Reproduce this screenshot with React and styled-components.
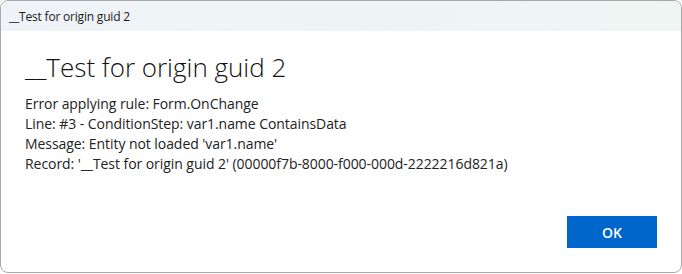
import React from "react";
import styled, { createGlobalStyle } from "styled-components";

const Global = createGlobalStyle`
  html, body { margin: 0; padding: 0; background: #ffffff; }
  body { font-family: "Open Sans", "Noto Sans", sans-serif; }
`;

const Window = styled.div`
  box-sizing: border-box;
  width: 682px;
  height: 273px;
  border: 1px solid #a9a9a9;
  border-radius: 8px;
  overflow: hidden;
  display: flex;
  flex-direction: column;
  background: #ffffff;
`;

const TitleBar = styled.div`
  height: 30px;
  display: flex;
  align-items: center;
  padding-left: 8px;
  background: linear-gradient(90deg, #eff3f7 0%, #eef4f6 60%, #edf6f3 100%);
  font-size: 12px;
  color: #1a1a1a;
  letter-spacing: -0.2px;
`;

const Content = styled.div`
  flex: 1;
  display: flex;
  flex-direction: column;
  padding: 19px 24px 0 24px;
`;

const Heading = styled.h1`
  margin: 0;
  font-size: 26px;
  font-weight: 300;
  color: #111;
  line-height: 34px;
`;

const Message = styled.div`
  margin-top: 10px;
  font-size: 14px;
  line-height: 20px;
  color: #222;
  letter-spacing: -0.06px;
`;

const Footer = styled.div`
  margin-top: auto;
  display: flex;
  justify-content: flex-end;
  padding: 0 24px 24px 0;
`;

const Button = styled.button`
  width: 90px;
  height: 32px;
  border: none;
  background: #0066cc;
  color: #ffffff;
  font-family: "Open Sans", "Noto Sans", sans-serif;
  font-size: 14px;
  font-weight: 600;
`;

export default function App() {
  const lines = [
    "Error applying rule: Form.OnChange",
    "Line: #3 - ConditionStep: var1.name ContainsData",
    "Message: Entity not loaded 'var1.name'",
    "Record: '__Test for origin guid 2' (00000f7b-8000-f000-000d-2222216d821a)",
  ];
  return (
    <>
      <Global />
      <Window>
        <TitleBar>__Test for origin guid 2</TitleBar>
        <Content>
          <Heading>__Test for origin guid 2</Heading>
          <Message>
            {lines.map((l) => (
              <div key={l}>{l}</div>
            ))}
          </Message>
        </Content>
        <Footer>
          <Button>OK</Button>
        </Footer>
      </Window>
    </>
  );
}
